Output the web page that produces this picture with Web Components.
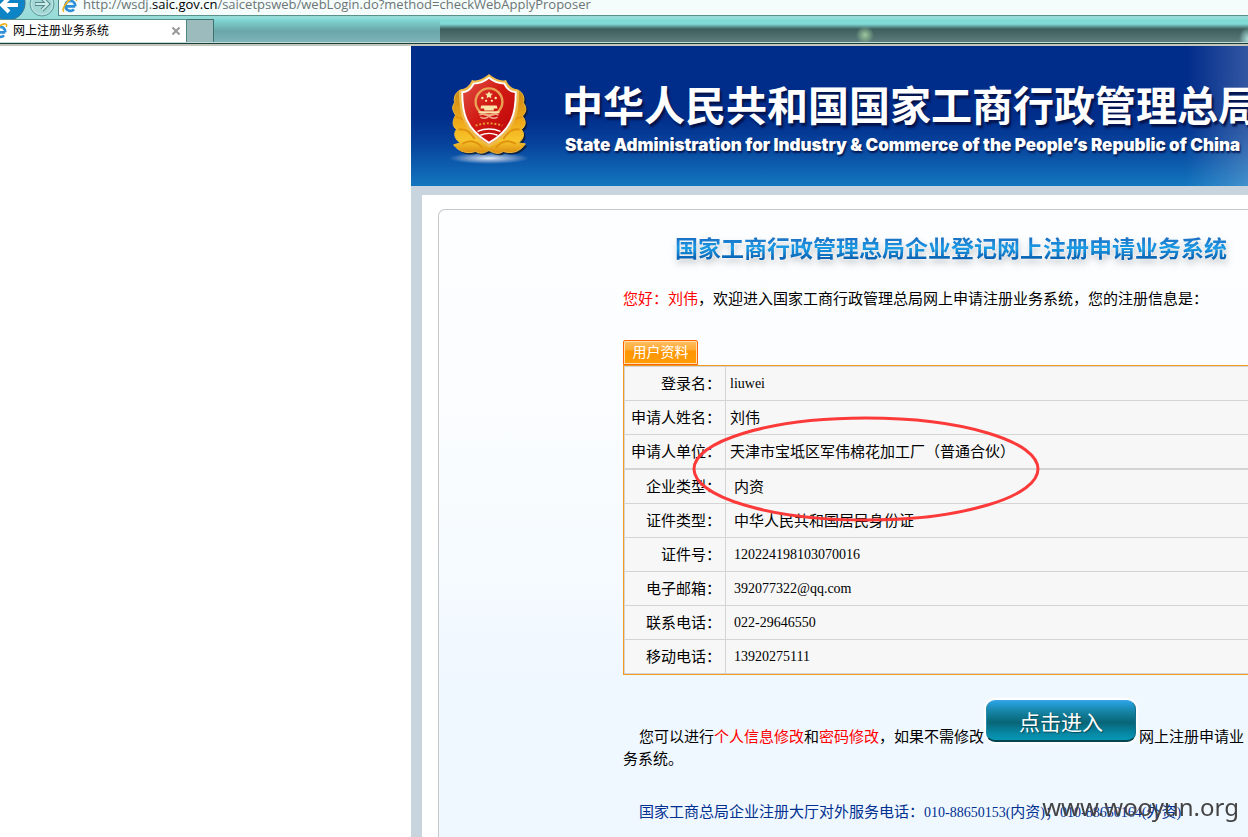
<!DOCTYPE html>
<html lang="zh-CN">
<head>
<meta charset="utf-8">
<title>网上注册业务系统</title>
<style>
html, body { margin: 0; height: 100%; }
body { overflow: hidden; background: #fff; color: #000; font-family: "Liberation Serif", "Noto Sans CJK SC", serif; font-size: 15px; }
</style>
</head>
<body>
<app-window></app-window>

<template id="t-app-window">
<style>
:host { display: flex; flex-direction: column; height: 100vh; overflow: hidden; }
main { flex: 1; min-height: 0; overflow: hidden; padding-left: 411px; }
.frame { background: #fff; border: solid #c8d5df; border-width: 9px 0 0 11px; padding: 14px 0 0 16px; box-sizing: border-box; min-height: 700px; }
.mark { position: fixed; right: 9px; bottom: 12px; font: 24px/36px "Noto Sans", sans-serif; color: #444; }
</style>
<browser-chrome></browser-chrome>
<main>
  <site-banner></site-banner>
  <div class="frame"><welcome-card></welcome-card></div>
</main>
<div class="mark">www.wooyun.org</div>
</template>

<template id="t-ie-icon">
<style>:host { display: block; flex: none; width: 16px; height: 16px; } svg { display: block; }</style>
<svg width="16" height="16" viewBox="0 0 16 16" fill="none">
  <path d="M13.2 9.3H4.2M13.3 9.2a5 5 0 1 0-1.3 3.1" stroke="#2f8fd6" stroke-width="2.7"/>
  <path d="M5 6.6a4 4 0 0 1 6-.2" stroke="#8fd0f5" stroke-width="1"/>
  <path d="M2 14.6C-.8 12.800 4 4.500 9.500 1.800 13 .2 15.500.4 14.300 4" stroke="#f3b21c" stroke-width="1.600"/>
</svg>
</template>

<template id="t-browser-chrome">
<style>
:host { display: block; flex: none; font-family: "Open Sans", "Noto Sans CJK SC", sans-serif;
  border-bottom: 2px solid #c6c5b9; }
.nav { display: flex; height: 19px; overflow: hidden; background: linear-gradient(#a9dedb, #93dcd8); align-items: flex-start; }
.nav svg { display: block; flex: none; }
.address { flex: 1; height: 16px; box-sizing: border-box; display: flex; align-items: flex-start; gap: 5px; padding-left: 3px;
  background: #f4fdfc; border-left: 1px solid #4f8381; border-bottom: 1px solid #5b918d; white-space: nowrap; overflow: hidden; }
.address ie-icon { margin-top: -3px; }
.url { font-size: 13px; line-height: 18px; margin-top: -5px; color: #6d7474; }
.url b { font-weight: 400; color: #000; }
.tabs { box-sizing: border-box; display: flex; height: 25px; border-bottom: 1px solid #173f3b; box-shadow: inset 0 -1px #c5dbd5;
  background:
    radial-gradient(ellipse 9px 9px at 865px 16px, #9dc79b, transparent),
    radial-gradient(ellipse 9px 12px at 100% 20px, #a9dfdc, transparent),
    linear-gradient(#80dbd7 0 5px, #3d5f5e 10px, #486968 15px, #5e807e) 440px 0 no-repeat,
    linear-gradient(#82d9d6, #6aa7aa 12px, #80b5ba); }
.tab { display: flex; align-items: center; width: 187px; margin-bottom: 1px; box-sizing: border-box; background: #fff; border-top: 1px solid #5a8f8c; border-right: 1px solid #4f8381; overflow: hidden; }
.tab ie-icon { margin-left: -8px; }
.title { flex: 1; padding-left: 5px; font-size: 12px; line-height: 20px; color: #000; }
button { border: 0; padding: 0; background: none; }
.close { width: 20px; height: 20px; display: grid; place-items: center; }
.add { width: 27px; margin-bottom: 1px; background: #9cbbbd; border: solid #3f7270; border-width: 1px 1px 0 0; }
</style>
<div class="nav">
  <svg width="58" height="19" viewBox="0 0 58 19" fill="none">
    <circle cx="8" cy="3" r="17" fill="#0c84c6" stroke="#2e6f8d"/>
    <path d="M18 5H3M9-2 2 5l7 7" stroke="#fff" stroke-width="4"/>
    <circle cx="42" cy="4" r="12" fill="#a2d6d5" stroke="#5f9d9d"/>
    <circle cx="42" cy="4" r="10.500" stroke="#c2e7e5"/>
    <path d="M35 4h13M42-2l6 6-6 6" stroke="#538887" stroke-width="4"/>
    <path d="M35.500 4H48M42-2l6 6-6 6" stroke="#c9ebe9" stroke-width="2"/>
  </svg>
  <div class="address"><ie-icon></ie-icon><span class="url" role="textbox" aria-label="地址">http://wsdj.<b>saic.gov.cn</b>/saicetpsweb/webLogin.do?method=checkWebApplyProposer</span></div>
</div>
<div class="tabs">
  <div class="tab"><ie-icon></ie-icon><span class="title">网上注册业务系统</span>
    <button class="close" aria-label="关闭"><svg width="8" height="8" viewBox="0 0 8 8"><path d="M.5.5l7 7M7.500.5l-7 7" stroke="#989898" stroke-width="2"/></svg></button></div>
  <button class="add" aria-label="新建选项卡"></button>
</div>
</template>

<template id="t-site-banner">
<style>
:host { display: flex; height: 140px; align-items: flex-start; overflow: hidden; white-space: nowrap; color: #fff;
  background: linear-gradient(90deg, transparent 775px, rgba(255,255,255,.2) 837px, rgba(255,255,255,.4)), linear-gradient(#002c8a 0, #002d8a 70px, #06409a 95px, #1376bf); }
svg { flex: none; display: block; margin: 25px 0 0 34px; }
.names { margin: 27px 0 0 29px; }
.cn { margin: 0; font: 700 41px/60px "Noto Sans CJK SC", sans-serif; text-shadow: 2px 3px 2px #04144c; }
.en { margin: 2px 0 0 3px; font: 900 17px/20px Inter, sans-serif; font-optical-sizing: none; text-shadow: 1px 2px 2px #04144c; }
</style>
<svg width="88" height="96" viewBox="0 0 92 100">
  <defs>
    <linearGradient id="gold" x1="0" y1="0" x2="0" y2="1"><stop offset="0" stop-color="#c98a1a"/><stop offset=".5" stop-color="#f0a818"/><stop offset=".8" stop-color="#f7c62c"/><stop offset="1" stop-color="#dd8c10"/></linearGradient>
    <linearGradient id="red" x1="0" y1="0" x2="1" y2="1"><stop offset="0" stop-color="#e2564a"/><stop offset=".45" stop-color="#d21a14"/><stop offset="1" stop-color="#b80006"/></linearGradient>
    <radialGradient id="glow"><stop offset="0" stop-color="#e8edf5"/><stop offset=".5" stop-color="#a9bddd" stop-opacity=".7"/><stop offset="1" stop-color="#a9bddd" stop-opacity="0"/></radialGradient>
  </defs>
  <ellipse cx="46" cy="91" rx="42" ry="6" fill="url(#glow)"/>
  <path d="M19 19C10 21 9 28 10 33 6 38 9 43 11 46 7 53 8 58 12 61 8 66 11 72 16 75L9 77C14 84 23 87 32 84 39 88 43 84 46 83 50 85 55 88 61 84 70 87 79 84 84 76L77 75C82 71 84 66 80 61 85 57 85 52 81 47 86 42 85 37 82 33 84 26 80 20 73 19Z" fill="#0c1830" transform="translate(2 2)" opacity=".8"/>
  <path d="M19 19C10 21 9 28 10 33 6 38 9 43 11 46 7 53 8 58 12 61 8 66 11 72 16 75L9 77C14 84 23 87 32 84 39 88 43 84 46 83 50 85 55 88 61 84 70 87 79 84 84 76L77 75C82 71 84 66 80 61 85 57 85 52 81 47 86 42 85 37 82 33 84 26 80 20 73 19Z" fill="url(#gold)" stroke="#f0bb3a"/>
  <path d="M12 34q8 1 10 10M11 48q9 0 13 10M14 61q10-2 17 10M18 76q12-7 21 4M80 34q-8 1-10 10M81 48q-9 0-13 10M78 61q-10-2-17 10M74 76q-12-7-21 4" fill="none" stroke="#e0930f" stroke-width="2"/>
  <path d="M46 5C51 9 58 12 63 11 66 18 71 20 76 21 76 42 74 61 46 78 18 61 16 42 16 21 21 20 26 18 29 11 34 12 41 9 46 5Z" fill="url(#red)" stroke="#edb94a" stroke-width="3"/>
  <path d="M46 7C51 11 57 13 62 13 65 19 69 22 74 22 74 43 71 60 46 75 21 60 18 43 18 22 23 22 27 19 30 13 35 13 41 11 46 7Z" fill="none" stroke="#fff" stroke-width="2"/>
  <circle cx="46" cy="32" r="14" fill="none" stroke="#e9a155" stroke-width="2.500"/>
  <g fill="#f9e5a8"><path d="M46 21l1.200 2.400 2.800.3-2 1.900.5 2.700-2.500-1.300-2.500 1.300.5-2.700-2-1.900 2.800-.3z"/><circle cx="39" cy="28" r="1.300"/><circle cx="53" cy="28" r="1.300"/><circle cx="43" cy="31" r="1.200"/><circle cx="49" cy="31" r="1.200"/>
  <path d="M38 36h16l1 3H37zM41 39h10v2H41zM35 42h22v2H35z"/></g>
  <path d="M36 46q5-3 10 1 5-4 10-1M37 48q5 3 9-1 4 4 9 1" fill="none" stroke="#efa98e" stroke-width="1.500"/>
  <path d="M32 57q14-5 28 0" fill="none" stroke="#e9a23a" stroke-width="2" stroke-dasharray="2 2"/>
  <path d="M34 63q12-5 24 0M37 67q9-4 18 0" fill="none" stroke="#fff" stroke-width="1.500"/>
</svg>
<div class="names">
  <h1 class="cn">中华人民共和国国家工商行政管理总局</h1>
  <p class="en">State Administration for Industry &amp; Commerce of the People’s Republic of China</p>
</div>
</template>

<template id="t-welcome-card">
<style>
:host { display: block; border: solid #c8c8c8; border-width: 1px 0 0 1px; border-radius: 7px 0 0 0; padding: 19px 0 0 184px; min-height: 680px; box-sizing: border-box;
  background: linear-gradient(#fdfeff, #fbfdff 180px, #f6fbff 340px, #eff7ff 480px); line-height: 22px; }
h2 { margin: 0 0 0 52px; font: 700 23px/36px "Noto Sans CJK SC", sans-serif; white-space: nowrap;
  filter: drop-shadow(0 0 1px #fff) drop-shadow(1px 4px 3px rgba(60,70,80,.25)); }
h2 span { color: transparent; background: linear-gradient(#1a6fc4 8px, #1b9ce6 18px, #0a63b4 28px); -webkit-background-clip: text; background-clip: text; }
.hello { margin: 23px 0 30px; }
em, a { font-style: normal; color: #f00; text-decoration: none; }
.next { margin: 25px 0 0; text-indent: 16px; }
.phone { margin: 31px 0 0; padding-left: 16px; color: #003090; white-space: nowrap; }
i { font: 14px/22px "Liberation Serif", serif; }
button { box-sizing: border-box; width: 150px; height: 42px; margin: 0 3px 6px 2px; padding: 0; border: 1px solid; border-bottom-width: 2px; border-color: #3fa4dd #14708a #07444f #2588a6; border-radius: 9px;
  background: linear-gradient(#2ba3e6, #14819f 30%, #086577 55%, #078aa7 85%, #0798b5); box-shadow: 0 0 2px 2px #fff; color: #fff; font: 21px/38px "Noto Sans CJK SC", sans-serif; vertical-align: bottom; text-indent: 0; text-shadow: 1px 1px 1px #064c5a; }
</style>
<h2><span>国家工商行政管理总局企业登记网上注册申请业务系统</span></h2>
<p class="hello"><em>您好：刘伟</em>，欢迎进入国家工商行政管理总局网上申请注册业务系统，您的注册信息是：</p>
<profile-table></profile-table>
<p class="next">您可以进行<a href="#profile">个人信息修改</a>和<a href="#password">密码修改</a>，如果不需修改<button type="button">点击进入</button>网上注册申请业务系统。</p>
<p class="phone">国家工商总局企业注册大厅对外服务电话：<i>010-88650153(</i>内资<i>)</i>；<i>010-88650164(</i>外资<i>)</i></p>
</template>

<template id="t-profile-table">
<style>
:host { display: block; position: relative; }
.tab { box-sizing: border-box; width: 75px; height: 25px; padding: 1px; border: 1px solid #f60; border-radius: 2px 2px 0 0; background: #ffe0ae; color: #fff; text-align: center; font-size: 14px; line-height: 21px; }
.tab span { display: block; background: linear-gradient(#ffbb5c, #ffab33 8px, #ff9500 9px, #ff9c05); }
.box { border: solid #f39a21; border-width: 1px 0 1px 1px; }
table { width: 100%; border-spacing: 0; border: solid #d4d4d4; border-width: 1px 0 0 1px; background: #f7f7f7; }
th, td { box-sizing: border-box; height: 34px; padding: 0 4px; border-bottom: 1px solid #d4d4d4; font-weight: 400; line-height: 22px; text-align: left; white-space: nowrap; }
th { width: 101px; border-right: 1px solid #d4d4d4; text-align: right; }
tr.split > * { height: 35px; border-bottom-width: 2px; }
td.in { padding-left: 8px; }
td.num { font-size: 14px; }
svg { position: absolute; left: 68px; top: 75px; pointer-events: none; }
</style>
<div class="tab"><span>用户资料</span></div>
<div class="box"><table>
  <tr><th scope="row">登录名：</th><td class="num">liuwei</td></tr>
  <tr><th scope="row">申请人姓名：</th><td>刘伟</td></tr>
  <tr class="split"><th scope="row">申请人单位：</th><td>天津市宝坻区军伟棉花加工厂（普通合伙）</td></tr>
  <tr><th scope="row">企业类型：</th><td class="in">内资</td></tr>
  <tr><th scope="row">证件类型：</th><td class="in">中华人民共和国居民身份证</td></tr>
  <tr><th scope="row">证件号：</th><td class="in num">120224198103070016</td></tr>
  <tr><th scope="row">电子邮箱：</th><td class="in num">392077322@qq.com</td></tr>
  <tr><th scope="row">联系电话：</th><td class="in num">022-29646550</td></tr>
  <tr><th scope="row">移动电话：</th><td class="in num">13920275111</td></tr>
</table></div>
<svg width="350" height="108" viewBox="0 0 350 108"><ellipse cx="175" cy="54" rx="172" ry="51" fill="none" stroke="#fc3a3a" stroke-width="3"/></svg>
</template>

<script>
for (const name of ['ie-icon', 'browser-chrome', 'site-banner', 'profile-table', 'welcome-card', 'app-window']) {
  customElements.define(name, class extends HTMLElement {
    constructor() {
      super();
      this.attachShadow({ mode: 'open' }).append(document.getElementById('t-' + name).content.cloneNode(true));
    }
  });
}
</script>
</body>
</html>
